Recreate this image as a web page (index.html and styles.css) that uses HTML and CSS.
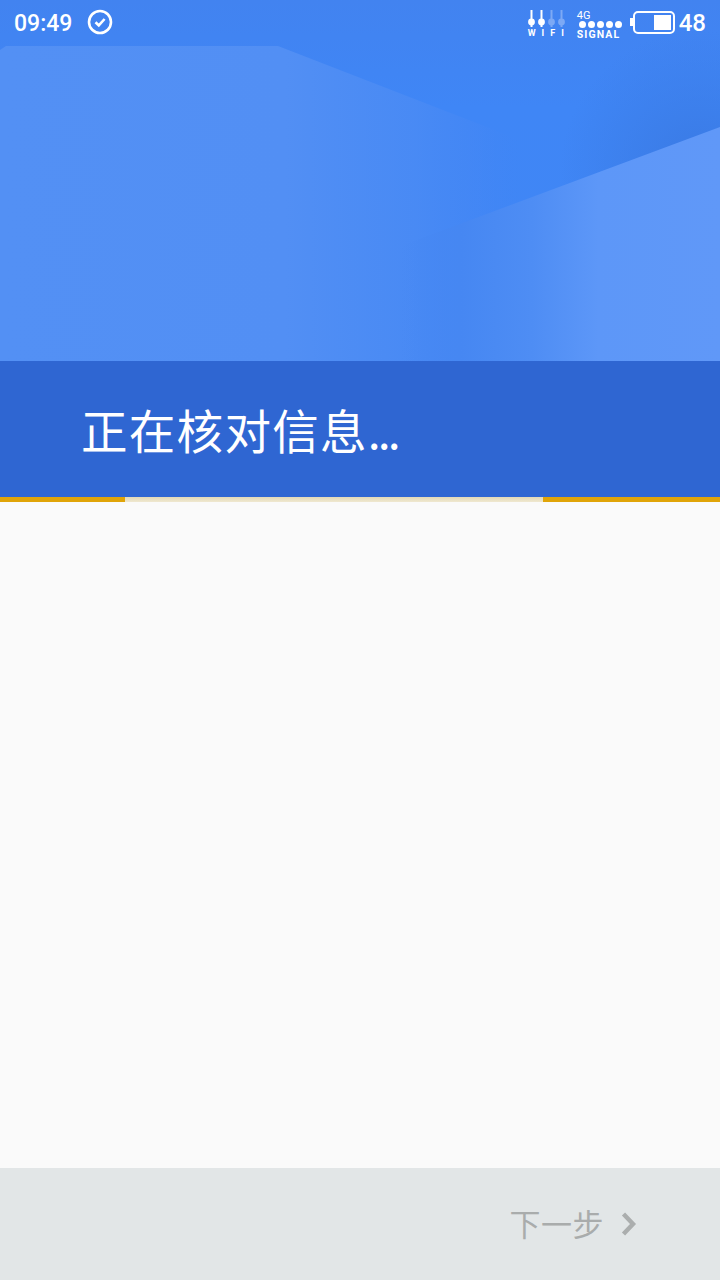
FILE: index.html
```html
<!DOCTYPE html>
<html lang="zh-CN">
<head>
    <meta charset="UTF-8">
    <meta name="viewport" content="width=device-width, initial-scale=1.0">
    <title>正在核对信息</title>
    <link rel="stylesheet" href="styles.css">
</head>
<body>
    <header class="hero">
        <svg class="hero-art" width="720" height="361" viewBox="0 0 720 361">
            <defs>
                <linearGradient id="left-shape" gradientUnits="userSpaceOnUse" x1="0" y1="0" x2="520" y2="0">
                    <stop offset="0" stop-color="#5390f4"/>
                    <stop offset="0.55" stop-color="#528ff4"/>
                    <stop offset="0.8" stop-color="#4b8bf4" stop-opacity="0.8"/>
                    <stop offset="0.92" stop-color="#4888f4" stop-opacity="0.35"/>
                    <stop offset="1" stop-color="#4184f3" stop-opacity="0"/>
                </linearGradient>
                <linearGradient id="right-shape" gradientUnits="userSpaceOnUse" x1="400" y1="0" x2="720" y2="0">
                    <stop offset="0" stop-color="#4687f2" stop-opacity="0"/>
                    <stop offset="0.19" stop-color="#4687f2"/>
                    <stop offset="0.41" stop-color="#4e8df4"/>
                    <stop offset="0.62" stop-color="#5d97f8"/>
                    <stop offset="1" stop-color="#6098f8"/>
                </linearGradient>
                <linearGradient id="sky" x1="0" y1="0" x2="0" y2="1">
                    <stop offset="0" stop-color="#4283f0"/>
                    <stop offset="0.3" stop-color="#3f86f6"/>
                    <stop offset="1" stop-color="#4186f4"/>
                </linearGradient>
                <radialGradient id="edge-shade" gradientUnits="userSpaceOnUse" cx="700" cy="170" r="140">
                    <stop offset="0" stop-color="#3a7ae4"/>
                    <stop offset="1" stop-color="#3a7ae4" stop-opacity="0"/>
                </radialGradient>
            </defs>
            <rect width="720" height="361" fill="url(#sky)"/>
            <rect x="520" y="20" width="200" height="260" fill="url(#edge-shade)"/>
            <path d="M0 50 L6 46 H278 L520 140 V361 H0 Z" fill="url(#left-shape)"/>
            <path d="M720 127 V361 H400 V246 L414 241 Z" fill="url(#right-shape)"/>
        </svg>

        <div class="status-bar">
            <div class="status-left">
                <span class="clock">09:49</span>
                <svg class="check" width="26" height="26" viewBox="0 0 26 26">
                    <circle cx="13" cy="13" r="11" fill="none" stroke="#fff" stroke-width="2.6"/>
                    <path d="M8.5 13.2 L11.8 16.4 L17.6 10" fill="none" stroke="#fff" stroke-width="2.6"/>
                </svg>
            </div>
            <div class="status-right">
                <div class="wifi">
                    <svg width="38" height="19" viewBox="0 0 38 19">
                        <g fill="#fff" stroke="#fff" stroke-width="2">
                            <path d="M3.5 0 V17"/><circle cx="3.5" cy="12" r="2.4"/>
                            <path d="M13.5 0 V17"/><circle cx="13.5" cy="12" r="2.4"/>
                        </g>
                        <g fill="#7da9f5" stroke="#7da9f5" stroke-width="2">
                            <path d="M23.5 0 V17"/><circle cx="23.5" cy="12" r="2.4"/>
                            <path d="M33.5 0 V17"/><circle cx="33.5" cy="12" r="2.4"/>
                        </g>
                    </svg>
                    <span class="wifi-label">WIFI</span>
                </div>
                <div class="signal">
                    <span class="signal-type">4G</span>
                    <span class="signal-dots"><i></i><i></i><i></i><i></i><i></i></span>
                    <span class="signal-label">SIGNAL</span>
                </div>
                <div class="battery">
                    <span class="battery-tip"></span>
                    <span class="battery-body"><span class="battery-level"></span></span>
                </div>
                <span class="battery-text">48</span>
            </div>
        </div>
    </header>

    <div class="banner">
        <h1>正在核对信息<span class="dots">...</span></h1>
    </div>
    <div class="progress">
        <div class="progress-end left"></div>
        <div class="progress-middle"></div>
        <div class="progress-end right"></div>
    </div>

    <main class="content"></main>

    <footer class="footer">
        <div class="next">
            <span class="next-label">下一步</span>
            <svg width="18" height="26" viewBox="0 0 18 26">
                <path d="M3.5 3 L13 13 L3.5 23" fill="none" stroke="#abaeae" stroke-width="4.4"/>
            </svg>
        </div>
    </footer>
</body>
</html>
```

FILE: styles.css
```css
html, body {
    height: 100%;
}
body {
    margin: 0;
    display: flex;
    flex-direction: column;
    height: 1280px;
    overflow: hidden;
    background-color: #fafafa;
    font-family: "Noto Sans CJK SC", Roboto, sans-serif;
}
.hero {
    position: relative;
    height: 361px;
    flex-shrink: 0;
}
.hero-art {
    position: absolute;
    top: 0;
    left: 0;
}
.status-bar {
    position: relative;
    height: 46px;
    display: flex;
    align-items: center;
    justify-content: space-between;
    padding: 0 14px;
    color: #fff;
    font-family: Roboto, sans-serif;
}
.status-left {
    display: flex;
    align-items: center;
    gap: 15px;
}
.clock {
    font-size: 23px;
    font-weight: 500;
}
.check {
    display: block;
    margin-top: -2px;
}
.status-right {
    display: flex;
    align-items: center;
}
.wifi {
    width: 38px;
    display: flex;
    flex-direction: column;
    margin-right: 11px;
    padding-top: 2px;
}
.wifi svg {
    display: block;
}
.wifi-label {
    font-size: 9px;
    font-weight: 700;
    line-height: 9px;
    letter-spacing: 6px;
}
.signal {
    width: 45px;
    display: flex;
    flex-direction: column;
    margin-right: 8px;
    padding-top: 2px;
}
.signal-type {
    font-size: 11px;
    line-height: 11px;
}
.signal-dots {
    display: flex;
    gap: 2px;
    margin: 0 0 2px 2px;
}
.signal-dots i {
    width: 7px;
    height: 7px;
    border-radius: 50%;
    background-color: #fff;
}
.signal-label {
    font-size: 10.5px;
    font-weight: 700;
    line-height: 9px;
    letter-spacing: 1.1px;
}
.battery {
    display: flex;
    align-items: center;
    margin-right: 4px;
    margin-top: -2px;
}
.battery-tip {
    width: 3px;
    height: 8px;
    background-color: #fff;
}
.battery-body {
    width: 42px;
    height: 23px;
    box-sizing: border-box;
    border: 2.5px solid #fff;
    border-radius: 5px;
    display: flex;
    justify-content: flex-end;
    padding: 2px 2px;
}
.battery-level {
    width: 17px;
    background-color: #fff;
}
.battery-text {
    font-size: 24px;
    font-weight: 500;
}
.banner {
    height: 136px;
    flex-shrink: 0;
    box-sizing: border-box;
    padding: 39px 0 0 81px;
    background-color: #2f66d2;
}
.banner h1 {
    margin: 0;
    font-size: 46.5px;
    font-weight: 400;
    line-height: 58px;
    letter-spacing: 1.3px;
    color: #fff;
}
.dots {
    letter-spacing: -3px;
}
.progress {
    height: 5px;
    flex-shrink: 0;
    display: flex;
}
.progress-end {
    background-color: #e0a408;
}
.progress-end.left {
    width: 125px;
}
.progress-end.right {
    width: 177px;
}
.progress-middle {
    flex: 1;
    background: linear-gradient(#e3d9b8, #efe8d0);
}
.content {
    flex: 1;
}
.footer {
    height: 112px;
    flex-shrink: 0;
    display: flex;
    align-items: center;
    justify-content: flex-end;
    padding-right: 82px;
    background-color: #e2e6e7;
}
.next {
    display: flex;
    align-items: center;
    gap: 16px;
    color: #a9acac;
    font-size: 31px;
    font-weight: 400;
    letter-spacing: 0.5px;
}
.next-label {
    margin-top: -4px;
}
.next svg {
    display: block;
}
```
